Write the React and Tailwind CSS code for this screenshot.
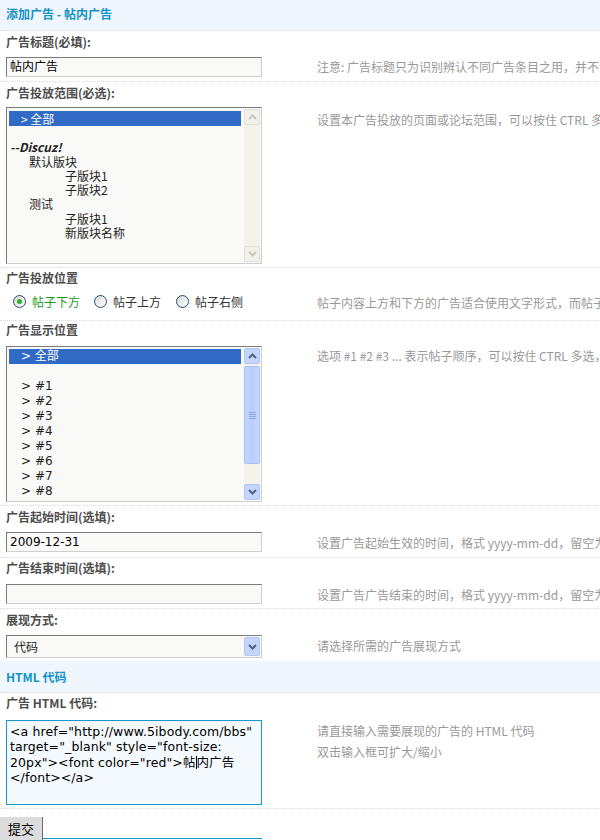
const line = 'border-b border-dotted border-[#d5dde4]'

function Chevron({ up, color = '#4d6185' }) {
  return (
    <svg width="9" height="6" viewBox="0 0 9 6">
      <path
        d={up ? 'M1 5 L4.5 1.5 L8 5' : 'M1 1 L4.5 4.5 L8 1'}
        fill="none"
        stroke={color}
        strokeWidth="2"
      />
    </svg>
  )
}

function FlatScrollbar() {
  return (
    <div className="flex w-[16px] flex-col bg-[#f3f2ec]">
      <div className="flex h-[16px] items-center justify-center rounded-[2px] border border-[#e0dfd7] bg-[#f1f0ea]">
        <Chevron up color="#c9c7bd" />
      </div>
      <div className="flex-1" />
      <div className="flex h-[16px] items-center justify-center rounded-[2px] border border-[#e0dfd7] bg-[#f1f0ea]">
        <Chevron color="#c9c7bd" />
      </div>
    </div>
  )
}

function BlueScrollbar() {
  return (
    <div className="flex w-[16px] flex-col bg-[#f3f2ec]">
      <div className="flex h-[16px] items-center justify-center rounded-[2px] border border-[#b3c6f2] bg-[#c4d6fb]">
        <Chevron up />
      </div>
      <div className="mt-[2px] flex h-[98px] flex-col items-center justify-center gap-[1px] rounded-[2px] border border-[#a9bff0] bg-[linear-gradient(90deg,#c6d6fc,#b9cdfa,#c9d8fc)]">
        <span className="h-[1px] w-[7px] bg-[#8fa9e8]" />
        <span className="h-[1px] w-[7px] bg-[#8fa9e8]" />
        <span className="h-[1px] w-[7px] bg-[#8fa9e8]" />
        <span className="h-[1px] w-[7px] bg-[#8fa9e8]" />
      </div>
      <div className="flex-1" />
      <div className="flex h-[16px] items-center justify-center rounded-[2px] border border-[#b3c6f2] bg-[#c4d6fb]">
        <Chevron />
      </div>
    </div>
  )
}

function Radio({ checked }) {
  return (
    <span className="inline-flex h-[13px] w-[13px] items-center justify-center rounded-full border border-[#1f4f82] bg-[linear-gradient(135deg,#d8d8d2,#ffffff)]">
      {checked && <span className="h-[5px] w-[5px] rounded-full bg-[#2fae2f]" />}
    </span>
  )
}

function TextInput({ value }) {
  return (
    <div className="h-[20px] w-[256px] border border-t-[#7b7b7b] border-l-[#7b7b7b] border-b-[#cfcfcf] border-r-[#cfcfcf] bg-[#f9f9f7] pl-[3px] font-['DejaVu_Sans','Noto_Sans_CJK_SC',sans-serif] text-[12px] leading-[18px] text-black">
      {value}
    </div>
  )
}

function Hint({ className, children }) {
  return (
    <div className={`min-w-0 flex-1 overflow-hidden whitespace-nowrap text-[12px] text-[#999] ${className}`}>
      {children}
    </div>
  )
}

const forums = [
  { text: '--Discuz!', cls: 'pl-[1px] font-bold italic' },
  { text: '默认版块', cls: 'pl-[20px]' },
  { text: '子版块1', cls: 'pl-[56px]' },
  { text: '子版块2', cls: 'pl-[56px]' },
  { text: '测试', cls: 'pl-[20px]' },
  { text: '子版块1', cls: 'pl-[56px]' },
  { text: '新版块名称', cls: 'pl-[56px]' },
]

const positions = ['#1', '#2', '#3', '#4', '#5', '#6', '#7', '#8']

export default function App() {
  return (
    <div className="w-full overflow-hidden bg-white font-['Noto_Sans_CJK_SC',sans-serif] text-[12px]">
      <div className={`h-[31px] bg-[#eff6fd] pl-[6px] pt-[6px] text-[12px] font-bold leading-[16px] text-[#1492c8] ${line}`}>
        添加广告 - 帖内广告
      </div>

      {/* 标题 */}
      <div className={`flex ${line}`}>
        <div className="w-[317px] shrink-0 pl-[6px] pb-[4px]">
          <div className="h-[26px] pt-[4px] font-bold leading-[14px] text-[#4d4d4d]">广告标题(必填):</div>
          <TextInput value="帖内广告" />
        </div>
        <Hint className="pt-[29px] leading-[14px]">注意: 广告标题只为识别辨认不同广告条目之用，并不会在广告中显示</Hint>
      </div>

      {/* 投放范围 */}
      <div className={`flex ${line}`}>
        <div className="w-[317px] shrink-0 pl-[6px] pb-[3px]">
          <div className="h-[25px] pt-[4px] font-bold leading-[14px] text-[#4d4d4d]">广告投放范围(必选):</div>
          <div className="flex h-[157px] w-[256px] border border-t-[#7b7b7b] border-l-[#7b7b7b] border-b-[#cfcfcf] border-r-[#cfcfcf] bg-[#f9f9f7]">
            <div className="flex-1 pl-[2px] pr-[3px] pt-[3px] leading-[14.25px] text-[#222]">
              <div className="h-[15px] bg-[#316ac5] pl-[12px] leading-[15px] text-white">&gt; 全部</div>
              <div className="h-[14.25px]" />
              {forums.map((f, i) => (
                <div key={i} className={f.cls}>{f.text}</div>
              ))}
            </div>
            <div className="py-[1px] pr-[1px]">
              <div className="flex h-full">
                <FlatScrollbar />
              </div>
            </div>
          </div>
        </div>
        <Hint className="pt-[31px] leading-[14px]">设置本广告投放的页面或论坛范围，可以按住 CTRL 多选，选择“全部”为不限制范围</Hint>
      </div>

      {/* 投放位置 */}
      <div className={`flex ${line}`}>
        <div className="w-[317px] shrink-0 pl-[6px] pb-[9px]">
          <div className="h-[24px] pt-[3px] font-bold leading-[14px] text-[#4d4d4d]">广告投放位置</div>
          <div className="flex h-[19px] items-center pl-[7px] leading-[14px]">
            <Radio checked />
            <span className="ml-[6px] text-[#1a9a1a]">帖子下方</span>
            <span className="ml-[14px] flex"><Radio /></span>
            <span className="ml-[6px] text-[#333]">帖子上方</span>
            <span className="ml-[15px] flex"><Radio /></span>
            <span className="ml-[6px] text-[#333]">帖子右侧</span>
          </div>
        </div>
        <Hint className="pt-[28px] leading-[14px]">帖子内容上方和下方的广告适合使用文字形式，而帖子右侧的广告适合使用图片形式</Hint>
      </div>

      {/* 显示位置 */}
      <div className={`flex ${line}`}>
        <div className="w-[317px] shrink-0 pl-[6px] pb-[3px]">
          <div className="h-[25px] pt-[2px] font-bold leading-[14px] text-[#4d4d4d]">广告显示位置</div>
          <div className="flex h-[156px] w-[256px] border border-t-[#7b7b7b] border-l-[#7b7b7b] border-b-[#cfcfcf] border-r-[#cfcfcf] bg-[#f9f9f7]">
            <div className="flex-1 overflow-hidden pl-[2px] pr-[3px] pt-[2px] font-['DejaVu_Sans','Noto_Sans_CJK_SC',sans-serif] leading-[15px] text-[#222]">
              <div className="h-[15px] bg-[#316ac5] pl-[12px] text-white">&gt; 全部</div>
              <div className="h-[15px]" />
              {positions.map((p) => (
                <div key={p} className="pl-[12px]">&gt; {p}</div>
              ))}
            </div>
            <div className="py-[1px] pr-[1px]">
              <div className="flex h-full">
                <BlueScrollbar />
              </div>
            </div>
          </div>
        </div>
        <Hint className="pt-[28px] leading-[14px]">选项 #1 #2 #3 ... 表示帖子顺序，可以按住 CTRL 多选，选择“全部”为不限制</Hint>
      </div>

      {/* 起始时间 */}
      <div className={`flex ${line}`}>
        <div className="w-[317px] shrink-0 pl-[6px] pb-[5px]">
          <div className="h-[26px] pt-[4px] font-bold leading-[14px] text-[#4d4d4d]">广告起始时间(选填):</div>
          <TextInput value="2009-12-31" />
        </div>
        <Hint className="pt-[30px] leading-[14px]">设置广告起始生效的时间，格式 yyyy-mm-dd，留空为不限制起始时间</Hint>
      </div>

      {/* 结束时间 */}
      <div className={`flex ${line}`}>
        <div className="w-[317px] shrink-0 pl-[6px] pb-[4px]">
          <div className="h-[26px] pt-[3px] font-bold leading-[14px] text-[#4d4d4d]">广告结束时间(选填):</div>
          <TextInput value="" />
        </div>
        <Hint className="pt-[30px] leading-[14px]">设置广告广告结束的时间，格式 yyyy-mm-dd，留空为不限制结束时间</Hint>
      </div>

      {/* 展现方式 */}
      <div className="flex">
        <div className="w-[317px] shrink-0 pl-[6px] pb-[3px]">
          <div className="h-[26px] pt-[4px] font-bold leading-[14px] text-[#4d4d4d]">展现方式:</div>
          <div className="flex h-[23px] w-[256px] items-center border border-t-[#7b7b7b] border-l-[#7b7b7b] border-b-[#cfcfcf] border-r-[#cfcfcf] bg-[#f9f9f7] pr-[1px]">
            <span className="flex-1 pl-[7px] text-[#222]">代码</span>
            <span className="flex h-[19px] w-[16px] items-center justify-center rounded-[2px] border border-[#b3c6f2] bg-[#c4d6fb]">
              <Chevron />
            </span>
          </div>
        </div>
        <Hint className="pt-[30px] leading-[14px]">请选择所需的广告展现方式</Hint>
      </div>

      <div className={`h-[32px] bg-[#eff6fd] pl-[6px] pt-[8px] text-[12px] font-bold leading-[16px] text-[#1492c8] ${line}`}>
        HTML 代码
      </div>

      {/* HTML 代码 */}
      <div className={`flex ${line}`}>
        <div className="w-[317px] shrink-0 pl-[6px] pb-[3px]">
          <div className="h-[27px] pt-[3px] font-bold leading-[14px] text-[#4d4d4d]">广告 HTML 代码:</div>
          <div className="h-[85px] w-[256px] overflow-hidden whitespace-nowrap border border-[#1a96cc] bg-[#f4f9fd] pl-[3px] pt-[3px] font-['DejaVu_Sans','Noto_Sans_CJK_SC',sans-serif] text-[12.5px] leading-[15px] tracking-[0.1px] text-black">
            <div>&lt;a href="http://www.5ibody.com/bbs"</div>
            <div>target="_blank" style="font-size:</div>
            <div>
              20px"&gt;&lt;font color="red"&gt;帖<span className="inline-block h-[13px] w-[1px] translate-y-[2px] bg-black" />内广告
            </div>
            <div>&lt;/font&gt;&lt;/a&gt;</div>
          </div>
        </div>
        <Hint className="pt-[27px] leading-[21px]">
          <div>请直接输入需要展现的广告的 HTML 代码</div>
          <div>双击输入框可扩大/缩小</div>
        </Hint>
      </div>

      <div className="relative h-[40px] pt-[8px]">
        <button className="relative z-10 h-[24px] w-[43px] border-r border-r-[#6a6a6a] bg-[#dcdcdc] text-[13px] leading-[24px] text-black">
          提交
        </button>
        <div className="absolute left-[6px] top-[29px] h-[20px] w-[256px] border-t border-[#1a96cc] bg-[#f4f9fd]" />
      </div>
    </div>
  )
}
